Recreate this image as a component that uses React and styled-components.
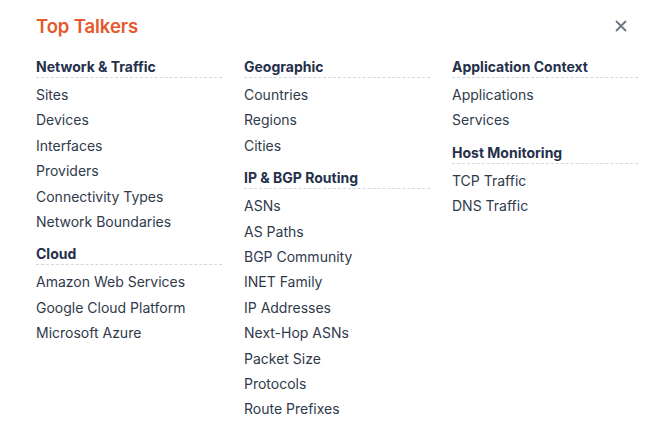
import React from "react";
import styled, { createGlobalStyle } from "styled-components";

const sections = [
  [
    {
      title: "Network & Traffic",
      items: ["Sites", "Devices", "Interfaces", "Providers", "Connectivity Types", "Network Boundaries"],
    },
    {
      title: "Cloud",
      items: ["Amazon Web Services", "Google Cloud Platform", "Microsoft Azure"],
    },
  ],
  [
    { title: "Geographic", items: ["Countries", "Regions", "Cities"] },
    {
      title: "IP & BGP Routing",
      items: [
        "ASNs",
        "AS Paths",
        "BGP Community",
        "INET Family",
        "IP Addresses",
        "Next-Hop ASNs",
        "Packet Size",
        "Protocols",
        "Route Prefixes",
      ],
    },
  ],
  [
    { title: "Application Context", items: ["Applications", "Services"] },
    { title: "Host Monitoring", items: ["TCP Traffic", "DNS Traffic"] },
  ],
];

function App() {
  return (
    <>
      <GlobalStyle />
      <Panel>
        <Header>
          <Title>Top Talkers</Title>
          <Close aria-label="Close">
            <svg width="12" height="12" viewBox="0 0 12 12">
              <path d="M1.5 1.5 L10.5 10.5 M10.5 1.5 L1.5 10.5" stroke="currentColor" strokeWidth="1.8" strokeLinecap="round" />
            </svg>
          </Close>
        </Header>
        <Columns>
          {sections.map((col, i) => (
            <Column key={i}>
              {col.map((group) => (
                <Group key={group.title}>
                  <GroupTitle>{group.title}</GroupTitle>
                  {group.items.map((item) => (
                    <Item key={item}>{item}</Item>
                  ))}
                </Group>
              ))}
            </Column>
          ))}
        </Columns>
      </Panel>
    </>
  );
}

const GlobalStyle = createGlobalStyle`
  body {
    margin: 0;
    background: #ffffff;
    font-family: Inter, "Noto Sans", sans-serif;
  }
`;
const Panel = styled.div`
  width: 672px;
  height: 448px;
  box-sizing: border-box;
  padding: 13px 36px 0 36px;
`;
const Header = styled.div`
  display: flex;
  align-items: center;
  justify-content: space-between;
  height: 26px;
`;
const Title = styled.h1`
  margin: 0;
  font-size: 18.5px;
  font-weight: 600;
  color: #e5582b;
  letter-spacing: -0.1px;
`;
const Close = styled.button`
  border: none;
  background: none;
  padding: 0;
  margin-right: 9px;
  display: flex;
  color: #6b7584;
  cursor: pointer;
`;
const Columns = styled.div`
  display: grid;
  grid-template-columns: 186px 186px 186px;
  column-gap: 22px;
  margin-top: 19px;
`;
const Column = styled.div`
  display: flex;
  flex-direction: column;
  gap: 11px;
`;
const Group = styled.div`
  display: flex;
  flex-direction: column;
`;
const GroupTitle = styled.div`
  font-size: 14px;
  font-weight: 700;
  color: #25304a;
  line-height: 18px;
  padding-bottom: 1px;
  border-bottom: 1px dashed #d3d7de;
  margin-bottom: 4px;
`;
const Item = styled.div`
  font-size: 14px;
  color: #2f3a4b;
  line-height: 25.4px;
`;

export default App;
